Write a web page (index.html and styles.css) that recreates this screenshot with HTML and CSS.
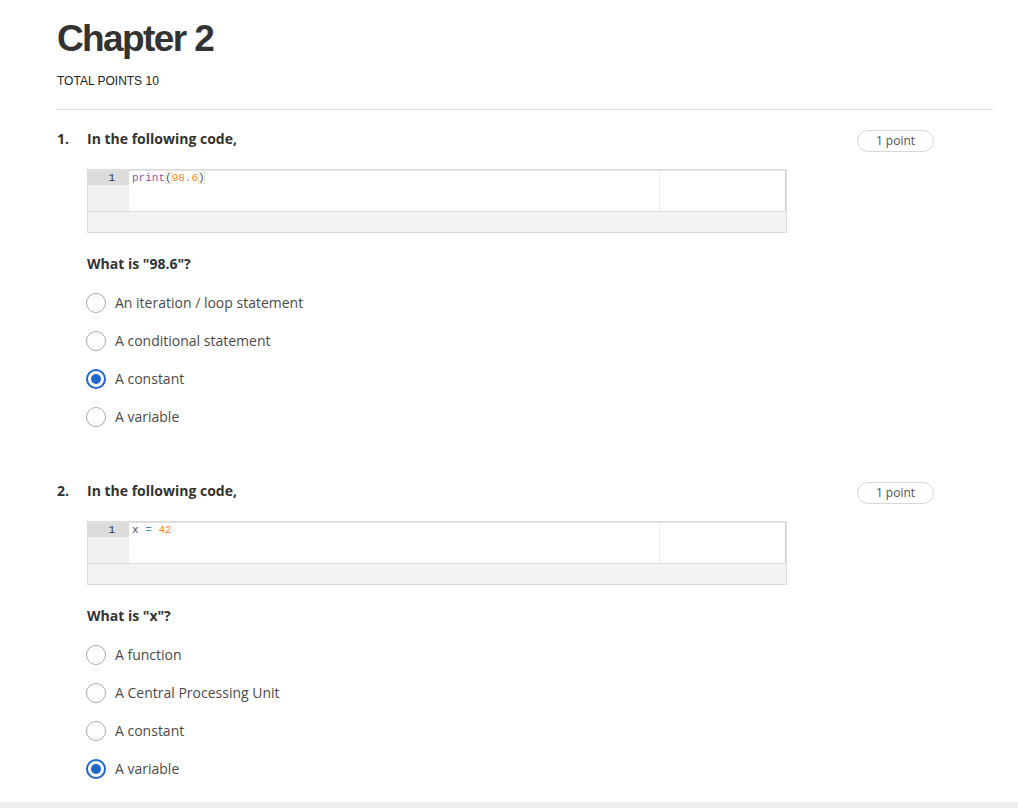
FILE: index.html
```html
<!DOCTYPE html>
<html lang="en">
<head>
<meta charset="utf-8">
<title>Chapter 2</title>
<link rel="stylesheet" href="styles.css">
</head>
<body>
<div class="page">
  <h1 class="title">Chapter 2</h1>
  <div class="total">TOTAL POINTS 10</div>
  <hr class="divider">

  <section class="question">
    <div class="q-head">
      <span class="q-num">1.</span>
      <span class="q-title">In the following code,</span>
      <span class="pill">1 point</span>
    </div>
    <div class="q-body">
      <div class="code">
        <div class="editor">
          <div class="gutter"><div class="gutter-active">1</div></div>
          <div class="code-area"><div class="line"><span class="kw">print</span><span class="paren">(</span><span class="num">98.6</span><span class="paren">)</span></div></div>
          <div class="code-rest"></div>
        </div>
        <div class="code-foot"></div>
      </div>
      <div class="prompt">What is "98.6"?</div>
      <div class="options">
        <label class="option"><span class="radio"></span><span class="opt-text">An iteration / loop statement</span></label>
        <label class="option"><span class="radio"></span><span class="opt-text">A conditional statement</span></label>
        <label class="option"><span class="radio checked"></span><span class="opt-text">A constant</span></label>
        <label class="option"><span class="radio"></span><span class="opt-text">A variable</span></label>
      </div>
    </div>
  </section>

  <section class="question second">
    <div class="q-head">
      <span class="q-num">2.</span>
      <span class="q-title">In the following code,</span>
      <span class="pill">1 point</span>
    </div>
    <div class="q-body">
      <div class="code">
        <div class="editor">
          <div class="gutter"><div class="gutter-active">1</div></div>
          <div class="code-area"><div class="line"><span class="ident">x</span> <span class="op">=</span> <span class="num">42</span></div></div>
          <div class="code-rest"></div>
        </div>
        <div class="code-foot"></div>
      </div>
      <div class="prompt">What is "x"?</div>
      <div class="options">
        <label class="option"><span class="radio"></span><span class="opt-text">A function</span></label>
        <label class="option"><span class="radio"></span><span class="opt-text">A Central Processing Unit</span></label>
        <label class="option"><span class="radio"></span><span class="opt-text">A constant</span></label>
        <label class="option"><span class="radio checked"></span><span class="opt-text">A variable</span></label>
      </div>
    </div>
  </section>
</div>
<div class="page-foot"></div>
</body>
</html>
```

FILE: styles.css
```css
html, body {
  margin: 0;
  padding: 0;
  background: #ffffff;
}

body {
  font-family: "Open Sans", "Liberation Sans", sans-serif;
  color: #333333;
}

.page {
  padding: 17px 25px 0 57px;
}

.title {
  margin: 0;
  font-family: "Liberation Sans", Arial, sans-serif;
  font-size: 37px;
  line-height: 44px;
  font-weight: 700;
  letter-spacing: -1.6px;
  color: #333333;
}

.total {
  margin-top: 12px;
  font-family: "Liberation Sans", Arial, sans-serif;
  font-size: 12px;
  line-height: 16px;
  color: #222222;
}

.divider {
  margin: 20px 0 0 0;
  border: 0;
  border-top: 1px solid #dedede;
  height: 0;
}

.question {
  margin-top: 19px;
}

.question.second {
  margin-top: 45px;
}

.q-head {
  display: flex;
  align-items: flex-start;
}

.q-num {
  width: 30px;
  flex: none;
  font-size: 14px;
  line-height: 20px;
  font-weight: 700;
  color: #333333;
}

.q-title {
  flex: 1;
  font-size: 14px;
  line-height: 20px;
  font-weight: 700;
  color: #333333;
}

.pill {
  flex: none;
  box-sizing: border-box;
  width: 77px;
  height: 22px;
  margin-top: 1px;
  margin-right: 59px;
  border: 1px solid #d8d8d8;
  border-radius: 11px;
  font-size: 12px;
  line-height: 20px;
  text-align: center;
  color: #555555;
}

.q-body {
  margin-left: 30px;
}

.code {
  margin-top: 17px;
  width: 700px;
  box-sizing: border-box;
  border: 1px solid #dcdcdc;
}

.editor {
  display: flex;
  height: 42px;
  box-sizing: border-box;
  border-bottom: 1px solid #dcdcdc;
  border-top: 1px solid #e2e2e2;
  border-right: 1px solid #d0d0d0;
}

.gutter {
  flex: none;
  width: 41px;
  background: #f0f0f0;
}

.gutter-active {
  height: 14px;
  background: #dcdcdc;
  font-family: "Liberation Mono", "DejaVu Sans Mono", monospace;
  font-size: 11px;
  line-height: 14px;
  text-align: right;
  padding-right: 14px;
  color: #333333;
}

.code-area {
  flex: none;
  width: 531px;
  border-right: 1px solid #ececec;
  padding-left: 3px;
  box-sizing: border-box;
}

.line {
  font-family: "Liberation Mono", "DejaVu Sans Mono", monospace;
  font-size: 11px;
  line-height: 14px;
  color: #4d4d4d;
  white-space: pre;
}

.kw { color: #8959a8; }
.num { color: #f5871f; }
.op { color: #3e999f; }
.ident { color: #4d4d4d; }
.paren {
  color: #4d4d4d;
  outline: 1px solid #e6e6d8;
  outline-offset: -1px;
}

.code-rest {
  flex: 1;
}

.code-foot {
  height: 20px;
  background: #f3f3f3;
}

.prompt {
  margin-top: 21px;
  font-size: 14px;
  line-height: 20px;
  font-weight: 700;
  color: #333333;
}

.options {
  margin-top: 10px;
  display: flex;
  flex-direction: column;
}

.option {
  display: flex;
  align-items: center;
  height: 38px;
}

.radio {
  flex: none;
  box-sizing: border-box;
  width: 20px;
  height: 20px;
  margin-left: -1px;
  border-radius: 50%;
  border: 1.5px solid #a9a9a9;
  background: #ffffff;
  position: relative;
}

.radio.checked {
  border: 2px solid #1f66cc;
}

.radio.checked::after {
  content: "";
  position: absolute;
  left: 50%;
  top: 50%;
  width: 10px;
  height: 10px;
  margin: -5px 0 0 -5px;
  border-radius: 50%;
  background: #1f66cc;
}

.opt-text {
  margin-left: 9px;
  font-size: 14px;
  line-height: 20px;
  color: #4a4a4a;
}

.page-foot {
  margin-top: 14px;
  height: 20px;
  background: #f0f0f0;
}
```
